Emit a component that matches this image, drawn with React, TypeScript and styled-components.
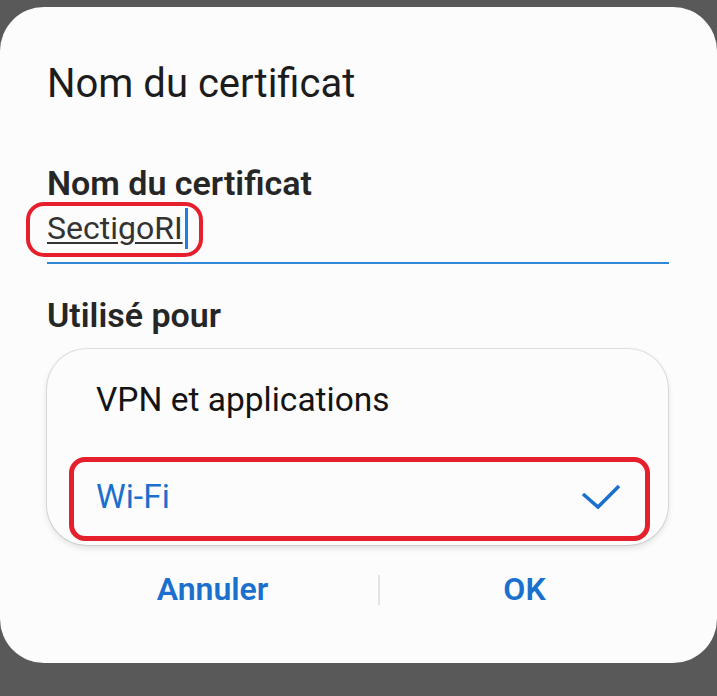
import React from "react";
import styled, { createGlobalStyle } from "styled-components";

const GlobalStyle = createGlobalStyle`
  html, body {
    margin: 0;
    padding: 0;
    background: #595959;
  }
  body {
    font-family: Roboto, "Noto Sans", "Liberation Sans", sans-serif;
  }
`;

const Screen = styled.div`
  height: 696px;
  padding-top: 7px;
  box-sizing: border-box;
  overflow: hidden;
`;

const Dialog = styled.div`
  height: 656px;
  box-sizing: border-box;
  background: #fcfcfc;
  border-radius: 44px;
  padding: 53px 48px 0 47px;
  display: flex;
  flex-direction: column;
`;

const Title = styled.h1`
  margin: 0;
  font-size: 40px;
  line-height: 48px;
  font-weight: 400;
  color: #1c1c1c;
`;

const Label = styled.div<{ $gap: number }>`
  margin-top: ${(p) => p.$gap}px;
  font-size: 34px;
  line-height: 40px;
  font-weight: 600;
  color: #262626;
`;

const Field = styled.div`
  margin-top: 5px;
  padding-bottom: 13px;
  border-bottom: 2px solid #3287d9;
`;

const FieldText = styled.span`
  position: relative;
  display: inline-block;
  font-size: 32px;
  line-height: 40px;
  color: #333333;
  text-decoration: underline;
  text-decoration-thickness: 2px;
  text-underline-offset: 3px;
`;

const Caret = styled.span`
  display: inline-block;
  width: 3px;
  height: 41px;
  margin-left: 2px;
  vertical-align: top;
  background: #1f7fe0;
`;

const Highlight = styled.span<{ $radius: number; $width: number }>`
  position: absolute;
  box-sizing: border-box;
  border: ${(p) => p.$width}px solid #e51f2b;
  border-radius: ${(p) => p.$radius}px;
  pointer-events: none;
`;

const FieldHighlight = styled(Highlight)`
  left: -21px;
  top: -6px;
  width: 177px;
  height: 55px;
`;

const RowHighlight = styled(Highlight)`
  left: 22px;
  right: 18px;
  top: 9px;
  bottom: 4px;
`;

const Menu = styled.div`
  margin-top: 14px;
  margin-right: 1px;
  padding-top: 2px;
  background: #fcfcfc;
  border-radius: 40px;
  box-shadow: 0 0 0 1px rgba(0, 0, 0, 0.1), 0 3px 6px rgba(0, 0, 0, 0.12);
`;

const Option = styled.div<{ $selected?: boolean }>`
  position: relative;
  height: 97px;
  display: flex;
  align-items: center;
  justify-content: space-between;
  padding: 0 47px 0 49px;
  font-size: 33.5px;
  color: ${(p) => (p.$selected ? "#1a70cc" : "#141414")};
`;

const Buttons = styled.div`
  margin-top: 24px;
  display: flex;
  align-items: center;
`;

const Button = styled.div<{ $width?: number }>`
  ${(p) => (p.$width ? `width: ${p.$width}px;` : "flex: 1;")}
  text-align: center;
  font-size: 32px;
  line-height: 40px;
  font-weight: 600;
  color: #1a70cc;
`;

const Divider = styled.div`
  width: 2px;
  height: 30px;
  margin-top: 2px;
  background: #e4e4e4;
`;

const Check = () => (
  <svg width="40" height="30" viewBox="0 0 40 30" fill="none">
    <path
      d="M2 12 L17 25 L38 4"
      stroke="#1a70cc"
      strokeWidth="3.5"
      strokeLinejoin="miter"
    />
  </svg>
);

export default function App() {
  return (
    <>
      <GlobalStyle />
      <Screen>
        <Dialog>
          <Title>Nom du certificat</Title>
          <Label $gap={55}>Nom du certificat</Label>
          <Field>
            <FieldText>
              SectigoRI
              <Caret />
              <FieldHighlight $radius={18} $width={4} />
            </FieldText>
          </Field>
          <Label $gap={31}>Utilisé pour</Label>
          <Menu>
            <Option>VPN et applications</Option>
            <Option $selected>
              Wi-Fi
              <Check />
              <RowHighlight $radius={16} $width={5} />
            </Option>
          </Menu>
          <Buttons>
            <Button $width={331}>Annuler</Button>
            <Divider />
            <Button>OK</Button>
          </Buttons>
        </Dialog>
      </Screen>
    </>
  );
}
